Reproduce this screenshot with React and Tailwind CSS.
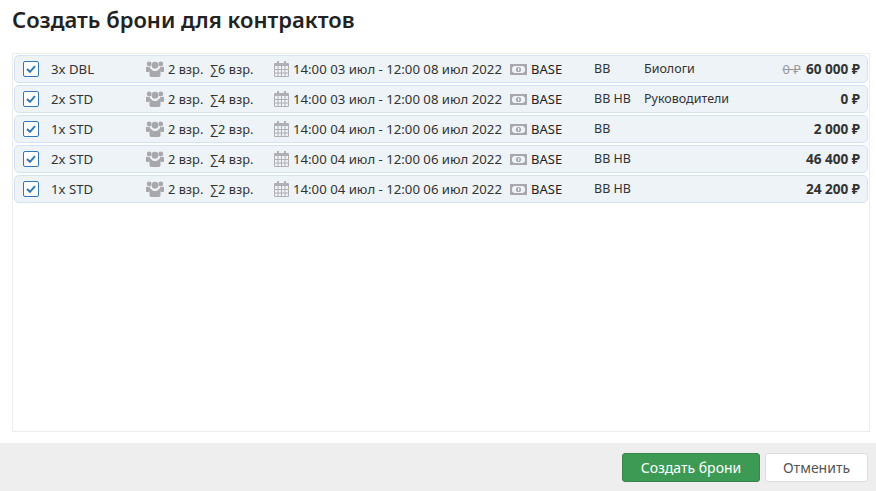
import React from "react";

const rows = [
  { n: "3x DBL", s: "6", d: "14:00 03 июл - 12:00 08 июл 2022", m: "BB", g: "Биологи", old: "0 ₽", p: "60 000 ₽" },
  { n: "2x STD", s: "4", d: "14:00 03 июл - 12:00 08 июл 2022", m: "BB HB", g: "Руководители", p: "0 ₽" },
  { n: "1x STD", s: "2", d: "14:00 04 июл - 12:00 06 июл 2022", m: "BB", g: "", p: "2 000 ₽" },
  { n: "2x STD", s: "4", d: "14:00 04 июл - 12:00 06 июл 2022", m: "BB HB", g: "", p: "46 400 ₽" },
  { n: "1x STD", s: "2", d: "14:00 04 июл - 12:00 06 июл 2022", m: "BB HB", g: "", p: "24 200 ₽" },
];

function Check() {
  return (
    <span className="flex h-4 w-4 items-center justify-center rounded-[2px] border border-[#2f77b8] bg-white">
      <svg width="10" height="8" viewBox="0 0 10 8">
        <path d="M1 4l3 2.8L9 1.2" fill="none" stroke="#2f77b8" strokeWidth="2" />
      </svg>
    </span>
  );
}

function Users() {
  return (
    <svg width="18" height="16" viewBox="0 0 18 16" className="mr-[4px] shrink-0">
      <g fill="#a8a8ac">
        <circle cx="9" cy="4.200" r="3.400" />
        <circle cx="3.200" cy="3" r="2.400" />
        <circle cx="14.800" cy="3" r="2.400" />
        <path d="M0 6.600C0 5.800.6 5.600 1.200 5.800c.8.4 1.600.5 2.600.3.2 1 .8 1.900 1.500 2.600C3.900 9.200 3.300 10.200 3.200 11H1c-.6 0-1-.4-1-1V6.600z" />
        <path d="M18 6.600c0-.8-.6-1-1.200-.8-.8.4-1.600.5-2.600.3-.2 1-.8 1.900-1.500 2.600 1.400.5 2 1.500 2.100 2.300H17c.6 0 1-.4 1-1V6.600z" />
        <path d="M5.300 8.200c1 1.300 2.200 1.800 3.700 1.800s2.700-.5 3.700-1.800c1 .3 1.800 1.200 1.800 2.800v3c0 1.200-.8 2-2 2H5.500c-1.200 0-2-.8-2-2v-3c0-1.600.8-2.500 1.800-2.800z" />
      </g>
    </svg>
  );
}

function Calendar() {
  return (
    <svg width="15" height="16" viewBox="0 0 15 16" className="shrink-0">
      <path
        fill="#b0b0b4"
        fillRule="evenodd"
        d="M3 0h2v2h5V0h2v2h2a1 1 0 0 1 1 1v12a1 1 0 0 1-1 1H1a1 1 0 0 1-1-1V3a1 1 0 0 1 1-1h2V0zM1 5v3h2.500V5H1zm3.500 0v3h2.500V5H4.500zm3.500 0v3h2.500V5H8zm3.500 0v3H14V5h-2.500zM1 9v2.500h2.500V9H1zm3.500 0v2.500h2.500V9H4.500zM8 9v2.500h2.500V9H8zm3.500 0v2.500H14V9h-2.500zM1 12.500V15h2.500v-2.500H1zm3.500 0V15h2.500v-2.500H4.500zm3.500 0V15h2.500v-2.500H8zm3.500 0V15H14v-2.500h-2.500z"
      />
    </svg>
  );
}

function Money() {
  return (
    <svg width="17" height="11" viewBox="0 0 17 11" className="shrink-0">
      <path
        fill="#a8a8ac"
        fillRule="evenodd"
        d="M0 0h17v11H0V0zm3.500 2A1.500 1.500 0 0 1 2 3.500v4A1.500 1.500 0 0 1 3.500 9h10A1.500 1.500 0 0 1 15 7.500v-4A1.500 1.500 0 0 1 13.500 2h-10z"
      />
      <circle cx="8.500" cy="5.500" r="2.600" fill="#a8a8ac" />
      <rect x="8" y="4" width="1.200" height="3" fill="#eef3f8" />
    </svg>
  );
}

export default function App() {
  return (
    <div className="flex h-[491px] w-[876px] flex-col bg-white font-['Noto_Sans','Open_Sans',sans-serif] text-[#333]">
      <h1 className="h-[41px] pl-3 pt-[4px] text-[22px] font-semibold leading-[30px] text-[#222]">
        Создать брони для контрактов
      </h1>
      <div className="mx-3 mt-[12px] flex h-[379px] w-[858px] flex-col gap-[2px] border border-[#ececec] p-[1px]">
        {rows.map((r, i) => (
          <div
            key={i}
            className="flex h-[28px] shrink-0 items-center rounded-[5px] border border-[#d3e3f3] bg-[#eef3f8] text-[13px] leading-[18px]"
          >
            <span className="ml-[8px] w-[28px] shrink-0"><Check /></span>
            <span className="w-[95px] shrink-0 text-[13.2px]">{r.n}</span>
            <span className="flex w-[128px] shrink-0 items-center text-[12.8px]">
              <Users />
              <span className="w-[42px] shrink-0">2 взр.</span>
              <span>∑{r.s} взр.</span>
            </span>
            <span className="flex w-[236px] shrink-0 items-center gap-[4px]">
              <Calendar />
              <span className="whitespace-nowrap text-[13.2px]">{r.d}</span>
            </span>
            <span className="flex w-[84px] shrink-0 items-center gap-[4px] text-[#222]">
              <Money />
              <span>BASE</span>
            </span>
            <span className="w-[50px] shrink-0 text-[12.5px]">{r.m}</span>
            <span className="w-[100px] shrink-0 text-[12.5px]">{r.g}</span>
            <span className="flex flex-1 items-baseline justify-end gap-[5px] pr-[7px]">
              {r.old && <span className="text-[#999] line-through">{r.old}</span>}
              <span className="text-[13.6px] font-bold">{r.p}</span>
            </span>
          </div>
        ))}
      </div>
      <div className="mt-[11px] flex h-[48px] items-center justify-end gap-[5px] bg-[#eeeeee] pr-[8px]">
        <button className="h-[29px] w-[138px] rounded-[3px] border border-[#38864b] bg-[#3d9a55] text-[14px] text-white">
          Создать брони
        </button>
        <button className="h-[29px] w-[103px] rounded-[3px] border border-[#dcdcdc] bg-white text-[14px] text-[#555]">
          Отменить
        </button>
      </div>
    </div>
  );
}
